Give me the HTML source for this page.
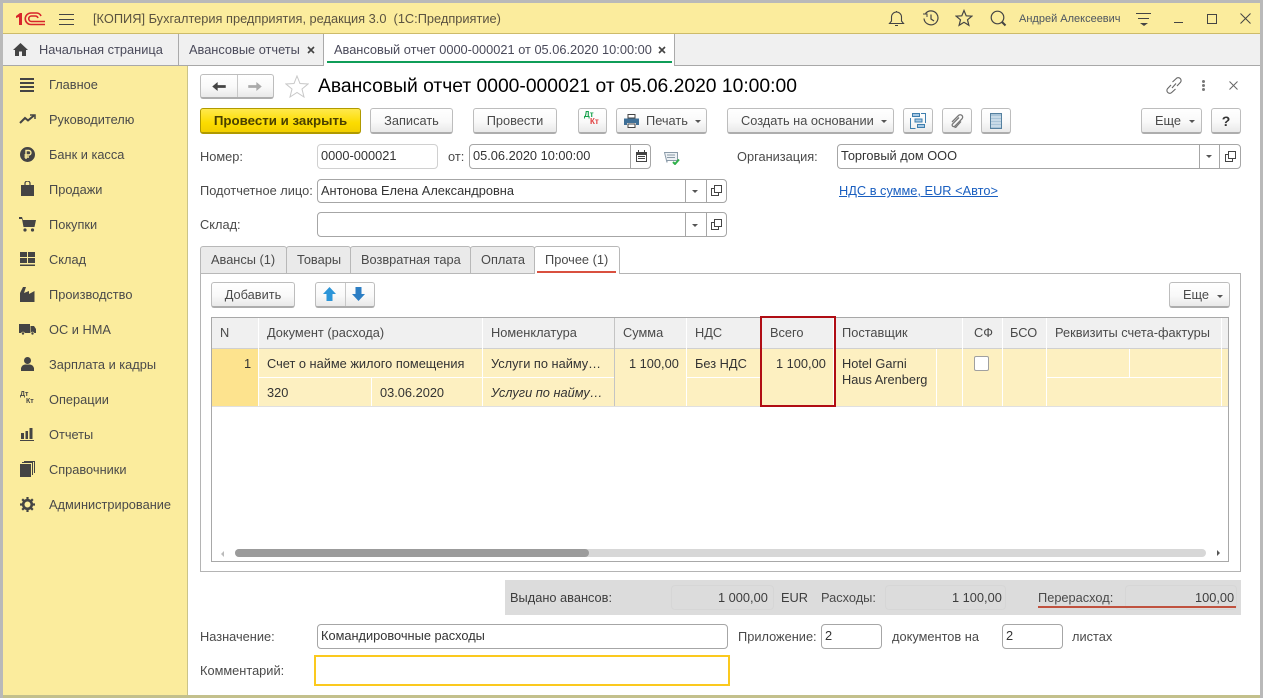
<!DOCTYPE html>
<html lang="ru"><head><meta charset="utf-8"><title>Авансовый отчет</title>
<style>
html,body{margin:0;padding:0}
body{width:1263px;height:698px;overflow:hidden;position:relative;background:#fff;font:12.8px/16px "Liberation Sans",sans-serif;color:#4a4a4a}
div,span,svg{position:absolute;box-sizing:border-box}
.t{white-space:nowrap;line-height:16px}
.b{border:1px solid #bdbdbd;border-bottom:2px solid #adadad;border-radius:3px;background:linear-gradient(#fff,#f9f9f9 55%,#e9e9e9);text-align:center;line-height:24px;color:#4a4a4a;white-space:nowrap}
.f{border:1px solid #a6a6a6;border-radius:4px;background:#fff;color:#333;padding-left:3px;line-height:22px;white-space:nowrap}
.s{width:1px;background:#a6a6a6}
.ar{width:0;height:0;border-left:3px solid transparent;border-right:3px solid transparent;border-top:3px solid #555}
.v{background:#fff;width:1px}
.n{left:49px;color:#4a4a4a}
</style></head><body>
<!-- frame -->
<div style="left:0;top:0;width:1263px;height:698px;background:#b9b9b9"></div>
<div style="left:3px;top:3px;width:1257px;height:692px;background:#fff"></div>
<div style="left:3px;top:695px;width:1257px;height:3px;background:#c3c08c"></div>
<!-- title bar -->
<div style="left:3px;top:3px;width:1257px;height:31px;background:#fbec9d;border-bottom:1px solid #cdbb6a"></div>
<svg style="left:15px;top:12px" width="31" height="14" viewBox="0 0 31 14" fill="none"><path d="M1 4 L5 1 H7 V13 H4 V5 L1 6Z" fill="#d8252b"/><path d="M30 12.5 H16 a5.7 5.7 0 0 1 0-11.5 H22 a5 5 0 0 1 4 3" stroke="#d8252b" stroke-width="1.6"/><path d="M30 9.5 H16.5 a2.7 2.7 0 0 1 0-5.5 H20 a3 3 0 0 1 3 2" stroke="#d8252b" stroke-width="1.6"/></svg>
<div style="left:59px;top:14px;width:15px;height:1px;background:#444;box-shadow:0 5px 0 #444,0 10px 0 #444"></div>
<div class="t" style="left:93px;top:11px;color:#5a5240">[КОПИЯ] Бухгалтерия предприятия, редакция 3.0&nbsp; (1С:Предприятие)</div>
<svg style="left:888px;top:10px" width="17" height="17" viewBox="0 0 17 17" fill="none" stroke="#444" stroke-width="1.1"><path d="M1.5 13.5 H15.5 L13.5 11 V7 a5 5 0 0 0-10 0 V11Z"/><path d="M7 15.5 H10 M8.5 1 V2"/></svg>
<svg style="left:922px;top:10px" width="17" height="17" viewBox="0 0 17 17" fill="none" stroke="#444" stroke-width="1.2"><path d="M3.5 3.5 a7 7 0 1 1-1.5 5"/><path d="M1 4 H5 V7" stroke-width="1"/><path d="M9 4.5 V9 L12 11"/></svg>
<svg style="left:955px;top:9px" width="18" height="18" viewBox="0 0 18 18" fill="none" stroke="#444" stroke-width="1.2"><path d="M9 1.5 L11.2 6.8 L16.8 7.2 L12.5 10.8 L13.9 16.3 L9 13.3 L4.1 16.3 L5.5 10.8 L1.2 7.2 L6.8 6.8Z"/></svg>
<svg style="left:990px;top:10px" width="17" height="17" viewBox="0 0 17 17" fill="none" stroke="#444"><circle cx="7.5" cy="7.5" r="6.3" stroke-width="1.2"/><path d="M12 12 L15.5 15.5" stroke-width="2"/></svg>
<div class="t" style="left:1019px;top:11px;font-size:11px;color:#4c5560">Андрей Алексеевич</div>
<div style="left:1136px;top:13px;width:15px;height:1px;background:#444"></div>
<div style="left:1138px;top:18px;width:11px;height:1px;background:#444"></div>
<div class="ar" style="left:1140px;top:23px;border-left-width:4px;border-right-width:4px;border-top-width:3px;border-top-color:#444"></div>
<div style="left:1174px;top:22px;width:9px;height:1px;background:#444"></div>
<div style="left:1207px;top:14px;width:10px;height:10px;border:1px solid #444"></div>
<svg style="left:1240px;top:13px" width="11" height="11" viewBox="0 0 11 11" stroke="#444"><path d="M.5.5 L10.5 10.5 M10.5.5 L.5 10.5"/></svg>
<!-- tabs bar -->
<div style="left:3px;top:34px;width:1257px;height:32px;background:#f0f0f0;border-bottom:1px solid #a8a8a8"></div>
<svg style="left:13px;top:43px" width="15" height="13" viewBox="0 0 15 13" fill="#444"><path d="M7.5 0 L15 7 H13 V13 H9 V8.5 H6 V13 H2 V7 H0Z"/></svg>
<div class="t" style="left:39px;top:42px;color:#4a4a5a">Начальная страница</div>
<div style="left:178px;top:34px;width:1px;height:31px;background:#aaa"></div>
<div class="t" style="left:189px;top:42px;color:#4a4a5a">Авансовые отчеты</div>
<svg style="left:307px;top:46px" width="8" height="8" viewBox="0 0 8 8" stroke="#444" stroke-width="1.6"><path d="M1 1 L7 7 M7 1 L1 7"/></svg>
<div style="left:323px;top:34px;width:352px;height:32px;background:#fff;border-left:1px solid #aaa;border-right:1px solid #aaa"></div>
<div style="left:327px;top:61px;width:345px;height:2px;background:#0f9d58"></div>
<div class="t" style="left:334px;top:42px;color:#4a4a5a">Авансовый отчет 0000-000021 от 05.06.2020 10:00:00</div>
<svg style="left:658px;top:46px" width="8" height="8" viewBox="0 0 8 8" stroke="#444" stroke-width="1.6"><path d="M1 1 L7 7 M7 1 L1 7"/></svg>
<!-- sidebar -->
<div style="left:3px;top:66px;width:185px;height:629px;background:#fbec9d;border-right:1px solid #cbc488"></div>
<div style="left:20px;top:78px;width:14px;height:2px;background:#444;box-shadow:0 4px 0 #444,0 8px 0 #444,0 12px 0 #444"></div>
<svg style="left:19px;top:114px" width="17" height="10" viewBox="0 0 17 10" fill="none" stroke="#444" stroke-width="2"><path d="M1 9 L6 4 L9 6.5 L15 1.5"/><path d="M11 1 H16 V5" stroke-width="1.5"/></svg>
<svg style="left:20px;top:147px" width="15" height="15" viewBox="0 0 15 15"><circle cx="7.5" cy="7.5" r="7.5" fill="#444"/><path d="M6 12 V3.5 H8.7 a2 2 0 0 1 0 4.5 H4.5 M4.5 10 H9" fill="none" stroke="#fbec9d" stroke-width="1.4"/></svg>
<svg style="left:21px;top:181px" width="13" height="15" viewBox="0 0 13 15" fill="#444"><path d="M0 4 H13 V15 H0Z"/><path d="M4 6 V2.5 a2.5 2.5 0 0 1 5 0 V6" fill="none" stroke="#444" stroke-width="1.2"/></svg>
<svg style="left:19px;top:217px" width="17" height="15" viewBox="0 0 17 15" fill="#444"><path d="M0 0 H3 L4 3 H17 L15.5 10 H4.5 L3 2 H0Z"/><circle cx="6" cy="13" r="1.6"/><circle cx="13.5" cy="13" r="1.6"/></svg>
<svg style="left:20px;top:252px" width="15" height="14" viewBox="0 0 15 14" fill="#444"><path d="M0 0 H7 V5 H0Z M8 0 H15 V5 H8Z M0 6 H7 V11 H0Z M8 6 H15 V11 H8Z M0 12.5 H15 V14 H0Z"/></svg>
<svg style="left:20px;top:287px" width="15" height="15" viewBox="0 0 15 15" fill="#444"><path d="M0 15 V6 L3 0 H6 L4 6 L9 4 V7 L14.500 4 V15Z"/></svg>
<svg style="left:19px;top:323px" width="17" height="12" viewBox="0 0 17 12" fill="#444"><path d="M0 1 H11 V10 H0Z M11.500 3 H15 L17 6 V10 H11.500Z"/><circle cx="4" cy="10.500" r="1.500" stroke="#fbec9d" stroke-width=".6"/><circle cx="13.500" cy="10.500" r="1.500" stroke="#fbec9d" stroke-width=".6"/></svg>
<svg style="left:21px;top:357px" width="13" height="14" viewBox="0 0 13 14" fill="#444"><circle cx="6.500" cy="3.500" r="3.500"/><path d="M0 14 V11 Q1 8 4 7.500 H9 Q12 8 13 11 V14Z"/></svg>
<div class="t" style="left:20px;top:391px;font-size:7px;line-height:8px;font-weight:bold;color:#444">Дт</div>
<div class="t" style="left:26px;top:398px;font-size:7px;line-height:8px;font-weight:bold;color:#444">Кт</div>
<svg style="left:20px;top:428px" width="14" height="13" viewBox="0 0 14 13" fill="#444"><path d="M1 5 H4 V11 H1Z M5.500 3 H8 V11 H5.500Z M9.500 0 H12.500 V11 H9.500Z M0 12 H14 V13 H0Z"/></svg>
<svg style="left:20px;top:461px" width="15" height="16" viewBox="0 0 15 16" fill="#444"><path d="M0 3 H11 V16 H0Z"/><path d="M2 1.500 H12.500 V14 M4 .5 H14.500 V12" fill="none" stroke="#444" stroke-width="1"/></svg>
<svg style="left:20px;top:497px" width="15" height="15" viewBox="0 0 15 15"><circle cx="7.500" cy="7.500" r="4.300" fill="none" stroke="#444" stroke-width="2.600"/><path d="M7.500 0 V15 M0 7.500 H15 M2.200 2.200 L12.800 12.800 M12.800 2.200 L2.200 12.800" stroke="#444" stroke-width="2.200" stroke-dasharray="2.600 9.800"/></svg>
<div class="t n" style="top:77px">Главное</div>
<div class="t n" style="top:112px">Руководителю</div>
<div class="t n" style="top:147px">Банк и касса</div>
<div class="t n" style="top:182px">Продажи</div>
<div class="t n" style="top:217px">Покупки</div>
<div class="t n" style="top:252px">Склад</div>
<div class="t n" style="top:287px">Производство</div>
<div class="t n" style="top:322px">ОС и НМА</div>
<div class="t n" style="top:357px">Зарплата и кадры</div>
<div class="t n" style="top:392px">Операции</div>
<div class="t n" style="top:427px">Отчеты</div>
<div class="t n" style="top:462px">Справочники</div>
<div class="t n" style="top:497px">Администрирование</div>
<!-- header -->
<div class="b" style="left:200px;top:74px;width:74px;height:25px"></div>
<div style="left:237px;top:75px;width:1px;height:22px;background:#c8c8c8"></div>
<svg style="left:212px;top:82px" width="14" height="9" viewBox="0 0 15 10" fill="#444"><path d="M0 5 L6 0 V3.500 H15 V6.500 H6 V10Z"/></svg>
<svg style="left:248px;top:82px" width="14" height="9" viewBox="0 0 15 10" fill="#aaa"><path d="M15 5 L9 0 V3.500 H0 V6.500 H9 V10Z"/></svg>
<svg style="left:285px;top:75px" width="24" height="23" viewBox="0 0 24 23" fill="#fff" stroke="#c8c8c8"><path d="M12 1 L15 8.500 L23 9 L17 14 L19 22 L12 17.500 L5 22 L7 14 L1 9 L9 8.500Z"/></svg>
<div class="t" style="left:318px;top:76px;font-size:19.3px;line-height:22px;color:#000">Авансовый отчет 0000-000021 от 05.06.2020 10:00:00</div>
<svg style="left:1165px;top:77px" width="18" height="17" viewBox="0 0 18 17" fill="none" stroke="#666" stroke-width="1.100"><path d="M7.500 5 L11 1.800 a2.800 2.800 0 0 1 4.500 3.500 L12 9"/><path d="M10.500 12 L7 15.200 a2.800 2.800 0 0 1-4.500-3.500 L6 8"/><path d="M7 11 L11 6.500"/></svg>
<div style="left:1202px;top:80px;width:3px;height:3px;background:#777;box-shadow:0 4px 0 #777,0 8px 0 #777;border-radius:50%"></div>
<svg style="left:1229px;top:81px" width="9" height="9" viewBox="0 0 9 9" stroke="#666"><path d="M.5.500 L8.500 8.500 M8.500.500 L.5 8.500"/></svg>
<!-- toolbar -->
<div class="b" style="left:200px;top:108px;width:161px;height:26px;border-color:#b09a00;background:linear-gradient(#ffe94d,#fcdc00 60%,#f2cf00);font-weight:bold;font-size:13.3px;color:#4a4000">Провести и закрыть</div>
<div class="b" style="left:370px;top:108px;width:83px;height:26px">Записать</div>
<div class="b" style="left:473px;top:108px;width:84px;height:26px">Провести</div>
<div class="b" style="left:578px;top:108px;width:29px;height:26px"></div>
<div class="t" style="left:584px;top:110px;font-size:8px;line-height:10px;font-weight:bold;color:#14a04a">Дт</div>
<div class="t" style="left:590px;top:117px;font-size:8px;line-height:10px;font-weight:bold;color:#e03c3c">Кт</div>
<div class="b" style="left:616px;top:108px;width:91px;height:26px;text-align:left;padding-left:29px">Печать</div>
<svg style="left:624px;top:114px" width="15" height="14" viewBox="0 0 15 14"><path d="M4 0.500 H11 V4 H4Z M4 10 H11 V13.500 H4Z" fill="#fff" stroke="#444"/><path d="M0 4.500 H15 V11 H12 V9 H3 V11 H0Z" fill="#3f6f96"/></svg>
<div class="ar" style="left:695px;top:120px"></div>
<div class="b" style="left:727px;top:108px;width:167px;height:26px;text-align:left;padding-left:13px">Создать на основании</div>
<div class="ar" style="left:881px;top:120px"></div>
<div class="b" style="left:903px;top:108px;width:30px;height:26px"></div>
<svg style="left:910px;top:113px" width="16" height="16" viewBox="0 0 16 16" fill="#a6c8e4" stroke="#3f7fae"><path d="M2.500 .5 H9.500 V3.500 H2.500Z M5 6 H12 V9 H5Z M7.500 11.500 H14.500 V14.500 H7.500Z"/><path d="M.5 5 V15.500 H5.500 M15.500 10 V.5 H11" fill="none"/></svg>
<div class="b" style="left:942px;top:108px;width:30px;height:26px"></div>
<svg style="left:949px;top:113px" width="16" height="16" viewBox="0 0 16 16" fill="none" stroke="#777" stroke-width="1.300"><path d="M3 9 L9.500 2.500 a2.300 2.300 0 0 1 3.500 3.300 L6 13 a1.500 1.500 0 0 1-2.500-2 L10 4.500"/><path d="M12 8.500 L7.500 13.500 a2 2 0 0 1-2 1"/></svg>
<div class="b" style="left:981px;top:108px;width:30px;height:26px"></div>
<svg style="left:990px;top:113px" width="12" height="16" viewBox="0 0 12 16"><rect x=".5" y=".5" width="11" height="15" fill="#a9c4d8" stroke="#55809f"/><path d="M1 4 H11 M1 7 H11 M1 10 H11 M1 13 H11" stroke="#e8f0f6"/></svg>
<div class="b" style="left:1141px;top:108px;width:61px;height:26px;text-align:left;padding-left:13px">Еще</div>
<div class="ar" style="left:1189px;top:120px"></div>
<div class="b" style="left:1211px;top:108px;width:30px;height:26px;font-weight:bold;font-size:14px;color:#333">?</div>
<!-- form -->
<div class="t" style="left:200px;top:149px">Номер:</div>
<div class="f" style="left:317px;top:144px;width:121px;height:25px;border-color:#d0d0d0">0000-000021</div>
<div class="t" style="left:448px;top:149px">от:</div>
<div class="f" style="left:469px;top:144px;width:182px;height:25px">05.06.2020 10:00:00</div>
<div class="s" style="left:630px;top:145px;height:23px"></div>
<svg style="left:636px;top:150px" width="11" height="12" viewBox="0 0 11 12" fill="#444"><path d="M0 2 H2 V0 H3 V2 H8 V0 H9 V2 H11 V12 H0Z M1 5 V11 H10 V5Z"/><path d="M2 6 H9 V7 H2Z M2 8 H9 V9 H2Z"/></svg>
<svg style="left:664px;top:152px" width="16" height="13" viewBox="0 0 16 13" fill="none"><path d="M.5 .5 H13.500 V8.500 H3 V10.500 Z" fill="#eef2f5" stroke="#8a9aa8"/><path d="M3 3 H11 M3 5.500 H11" stroke="#8a9aa8"/><path d="M9 10 L11 12 L15 7.500" stroke="#2fb04a" stroke-width="2"/></svg>
<div class="t" style="left:737px;top:149px">Организация:</div>
<div class="f" style="left:837px;top:144px;width:404px;height:25px">Торговый дом ООО</div>
<div class="s" style="left:1199px;top:145px;height:23px"></div>
<div class="s" style="left:1219px;top:145px;height:23px"></div>
<div class="ar" style="left:1206px;top:155px"></div>
<svg style="left:1225px;top:151px" width="11" height="11" viewBox="0 0 11 11" fill="none" stroke="#444"><path d="M3.500 .5 H10.500 V7.500 H3.500Z M3.500 3.500 H.5 V10.500 H7.500 V7.500"/></svg>
<div class="t" style="left:200px;top:183px">Подотчетное лицо:</div>
<div class="f" style="left:317px;top:179px;width:410px;height:24px">Антонова Елена Александровна</div>
<div class="s" style="left:685px;top:180px;height:22px"></div>
<div class="s" style="left:706px;top:180px;height:22px"></div>
<div class="ar" style="left:692px;top:190px"></div>
<svg style="left:711px;top:185px" width="11" height="11" viewBox="0 0 11 11" fill="none" stroke="#444"><path d="M3.500 .5 H10.500 V7.500 H3.500Z M3.500 3.500 H.5 V10.500 H7.500 V7.500"/></svg>
<div class="t" style="left:839px;top:183px;color:#1a5fc0;text-decoration:underline">НДС в сумме, EUR &lt;Авто&gt;</div>
<div class="t" style="left:200px;top:217px">Склад:</div>
<div class="f" style="left:317px;top:212px;width:410px;height:25px"></div>
<div class="s" style="left:685px;top:213px;height:23px"></div>
<div class="s" style="left:706px;top:213px;height:23px"></div>
<div class="ar" style="left:692px;top:224px"></div>
<svg style="left:711px;top:219px" width="11" height="11" viewBox="0 0 11 11" fill="none" stroke="#444"><path d="M3.500 .5 H10.500 V7.500 H3.500Z M3.500 3.500 H.5 V10.500 H7.500 V7.500"/></svg>
<!-- tabs -->
<div style="left:200px;top:273px;width:1041px;height:299px;border:1px solid #b4b4b4"></div>
<div style="left:200px;top:246px;width:87px;height:28px;background:#eaeaea;border:1px solid #b8b8b8;border-radius:3px 3px 0 0"></div>
<div style="left:286px;top:246px;width:65px;height:28px;background:#eaeaea;border:1px solid #b8b8b8;border-radius:3px 3px 0 0"></div>
<div style="left:350px;top:246px;width:121px;height:28px;background:#eaeaea;border:1px solid #b8b8b8;border-radius:3px 3px 0 0"></div>
<div style="left:470px;top:246px;width:65px;height:28px;background:#eaeaea;border:1px solid #b8b8b8;border-radius:3px 3px 0 0"></div>
<div style="left:534px;top:246px;width:86px;height:28px;background:#fff;border:1px solid #b8b8b8;border-bottom:0;border-radius:3px 3px 0 0"></div>
<div style="left:537px;top:271px;width:79px;height:2px;background:#d9503f"></div>
<div class="t" style="left:211px;top:252px">Авансы (1)</div>
<div class="t" style="left:297px;top:252px">Товары</div>
<div class="t" style="left:361px;top:252px">Возвратная тара</div>
<div class="t" style="left:481px;top:252px">Оплата</div>
<div class="t" style="left:545px;top:252px">Прочее (1)</div>
<div class="b" style="left:211px;top:282px;width:84px;height:26px">Добавить</div>
<div class="b" style="left:315px;top:282px;width:60px;height:26px"></div>
<div style="left:345px;top:283px;width:1px;height:23px;background:#c8c8c8"></div>
<svg style="left:323px;top:287px" width="13" height="15" viewBox="0 0 13 15" fill="#2c95d8"><path d="M6.500 0 L13 7 H9.500 V14 H3.500 V7 H0Z"/></svg>
<svg style="left:352px;top:287px" width="13" height="15" viewBox="0 0 13 15" fill="#2c7ec4"><path d="M6.500 14 L13 7 H9.500 V0 H3.500 V7 H0Z"/></svg>
<div class="b" style="left:1169px;top:282px;width:61px;height:26px;text-align:left;padding-left:13px">Еще</div>
<div class="ar" style="left:1217px;top:295px"></div>
<!-- table -->
<div style="left:211px;top:317px;width:1018px;height:245px;border:1px solid #a8a8a8"></div>
<div style="left:212px;top:318px;width:1016px;height:30px;background:#f0f0f0"></div>
<div style="left:212px;top:348px;width:1016px;height:1px;background:#d0d0d0"></div>
<div style="left:212px;top:349px;width:46px;height:57px;background:#fde38e"></div>
<div style="left:259px;top:349px;width:969px;height:57px;background:#fdf0c1"></div>
<div style="left:259px;top:377px;width:355px;height:1px;background:#fff"></div>
<div style="left:687px;top:377px;width:73px;height:1px;background:#fff"></div>
<div style="left:1047px;top:377px;width:174px;height:1px;background:#fff"></div>
<div style="left:212px;top:406px;width:1016px;height:1px;background:#e0e0e0"></div>
<div class="v" style="left:258px;top:318px;height:88px"></div>
<div class="v" style="left:371px;top:378px;height:28px"></div>
<div class="v" style="left:482px;top:318px;height:88px"></div>
<div style="left:614px;top:318px;width:1px;height:88px;background:#c4c4c4"></div>
<div class="v" style="left:686px;top:318px;height:88px"></div>
<div class="v" style="left:833px;top:318px;height:88px"></div>
<div class="v" style="left:936px;top:349px;height:57px"></div>
<div class="v" style="left:962px;top:318px;height:88px"></div>
<div class="v" style="left:1002px;top:318px;height:88px"></div>
<div class="v" style="left:1046px;top:318px;height:88px"></div>
<div class="v" style="left:1129px;top:349px;height:28px"></div>
<div class="v" style="left:1221px;top:318px;height:88px"></div>
<div class="t" style="left:220px;top:325px">N</div>
<div class="t" style="left:267px;top:325px">Документ (расхода)</div>
<div class="t" style="left:491px;top:325px">Номенклатура</div>
<div class="t" style="left:623px;top:325px">Сумма</div>
<div class="t" style="left:695px;top:325px">НДС</div>
<div class="t" style="left:770px;top:325px">Всего</div>
<div class="t" style="left:842px;top:325px">Поставщик</div>
<div class="t" style="left:974px;top:325px">СФ</div>
<div class="t" style="left:1010px;top:325px">БСО</div>
<div class="t" style="left:1055px;top:325px">Реквизиты счета-фактуры</div>
<div class="t" style="left:244px;top:356px;color:#333">1</div>
<div class="t" style="left:267px;top:356px;color:#333">Счет о найме жилого помещения</div>
<div class="t" style="left:491px;top:356px;color:#333">Услуги по найму…</div>
<div class="t" style="left:629px;top:356px;color:#333">1 100,00</div>
<div class="t" style="left:695px;top:356px;color:#333">Без НДС</div>
<div class="t" style="left:776px;top:356px;color:#333">1 100,00</div>
<div class="t" style="left:842px;top:356px;color:#333">Hotel Garni</div>
<div class="t" style="left:842px;top:372px;color:#333">Haus Arenberg</div>
<div style="left:974px;top:356px;width:15px;height:15px;background:#fff;border:1px solid #a0a0a0;border-radius:2px"></div>
<div class="t" style="left:267px;top:385px;color:#333">320</div>
<div class="t" style="left:380px;top:385px;color:#333">03.06.2020</div>
<div class="t" style="left:491px;top:385px;color:#333;font-style:italic">Услуги по найму…</div>
<div style="left:760px;top:316px;width:76px;height:91px;border:2px solid #b00d14"></div>
<div style="left:235px;top:549px;width:971px;height:8px;background:#d7d7d7;border-radius:4px"></div>
<div style="left:235px;top:549px;width:354px;height:8px;background:#9b9b9b;border-radius:4px"></div>
<div style="left:221px;top:551px;width:0;height:0;border:3px solid transparent;border-left:0;border-right:3px solid #bbb"></div>
<div style="left:1217px;top:550px;width:0;height:0;border:3px solid transparent;border-right:0;border-left:3px solid #555"></div>
<!-- summary -->
<div style="left:505px;top:580px;width:736px;height:35px;background:#dcdcdc"></div>
<div style="left:671px;top:585px;width:103px;height:25px;border:1px solid #d6d6d6;border-radius:4px"></div>
<div style="left:885px;top:585px;width:121px;height:25px;border:1px solid #d6d6d6;border-radius:4px"></div>
<div style="left:1125px;top:585px;width:112px;height:25px;border:1px solid #d6d6d6;border-radius:4px"></div>
<div class="t" style="left:510px;top:590px;color:#3d3d3d">Выдано авансов:</div>
<div class="t" style="left:718px;top:590px;color:#3d3d3d">1 000,00</div>
<div class="t" style="left:781px;top:590px;color:#3d3d3d">EUR</div>
<div class="t" style="left:821px;top:590px">Расходы:</div>
<div class="t" style="left:952px;top:590px;color:#3d3d3d">1 100,00</div>
<div class="t" style="left:1038px;top:590px">Перерасход:</div>
<div class="t" style="left:1195px;top:590px;color:#3d3d3d">100,00</div>
<div style="left:1038px;top:606px;width:198px;height:2px;background:#c0523f"></div>
<!-- bottom -->
<div class="t" style="left:200px;top:629px">Назначение:</div>
<div class="f" style="left:317px;top:624px;width:411px;height:25px">Командировочные расходы</div>
<div class="t" style="left:738px;top:629px">Приложение:</div>
<div class="f" style="left:821px;top:624px;width:61px;height:25px">2</div>
<div class="t" style="left:892px;top:629px">документов на</div>
<div class="f" style="left:1002px;top:624px;width:61px;height:25px">2</div>
<div class="t" style="left:1072px;top:629px">листах</div>
<div class="t" style="left:200px;top:663px">Комментарий:</div>
<div style="left:314px;top:655px;width:416px;height:31px;border:2px solid #fbc91e;background:#fff"></div>
</body></html>
